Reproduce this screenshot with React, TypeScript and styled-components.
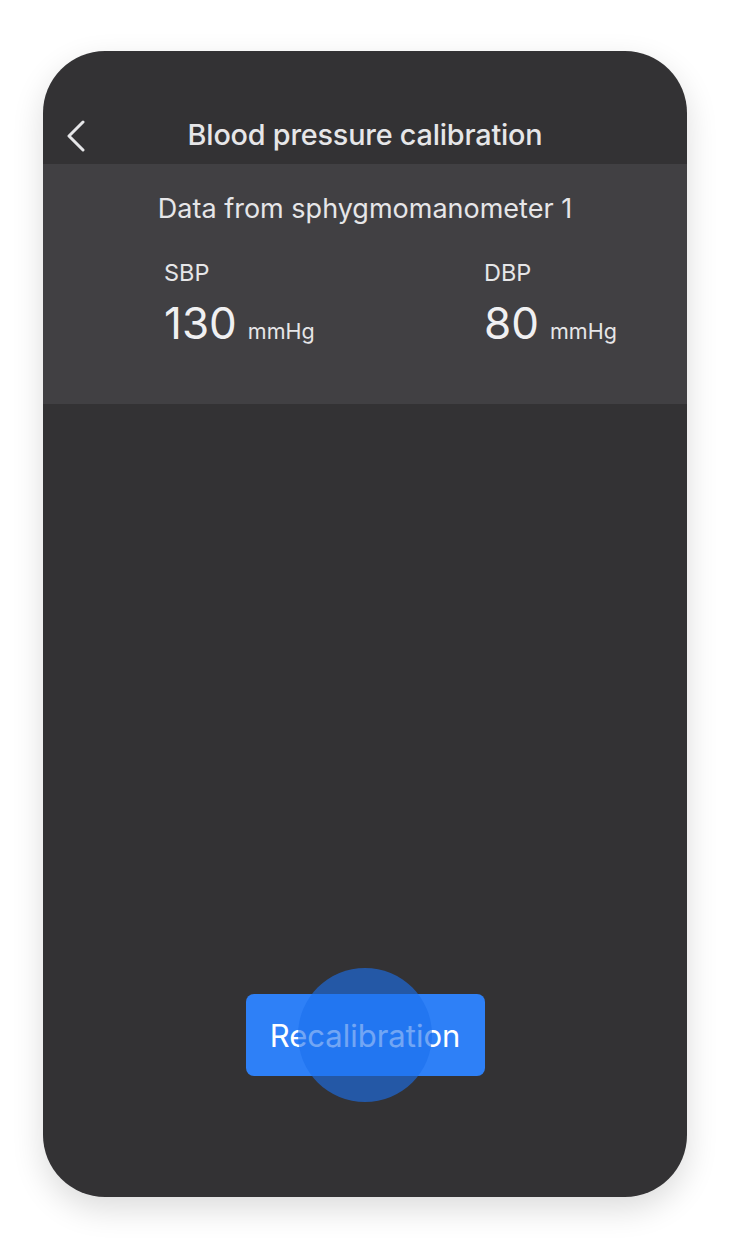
import React from 'react';
import styled, { createGlobalStyle } from 'styled-components';

const GlobalStyle = createGlobalStyle`
  html, body {
    margin: 0;
    padding: 0;
    background: #ffffff;
    font-family: 'Inter', 'Liberation Sans', sans-serif;
  }
`;

const Page = styled.div`
  width: 730px;
  height: 1247px;
  padding: 51px 43px 0 43px;
  box-sizing: border-box;
`;

const Phone = styled.div`
  width: 644px;
  height: 1146px;
  border-radius: 62px;
  background: #333234;
  box-shadow: 0 12px 32px rgba(0, 0, 0, 0.14);
  overflow: hidden;
  display: flex;
  flex-direction: column;
`;

const NavBar = styled.div`
  height: 113px;
  padding-top: 62px;
  box-sizing: border-box;
  display: flex;
  align-items: center;
  justify-content: center;
  position: relative;
`;

const BackButton = styled.button`
  position: absolute;
  left: 23px;
  top: 69px;
  background: none;
  border: none;
  padding: 0;
  display: flex;
  color: #e6e6e8;
  cursor: pointer;
`;

const Title = styled.h1`
  margin: 0;
  margin-top: -8px;
  font-size: 28.8px;
  font-weight: 500;
  color: #e6e6e8;
  letter-spacing: -0.2px;
`;

const DataCard = styled.div`
  background: #414043;
  height: 240px;
  box-sizing: border-box;
  padding: 27px 0 0 0;
  display: flex;
  flex-direction: column;
`;

const CardHeading = styled.div`
  text-align: center;
  font-size: 27px;
  color: #e6e6e8;
  line-height: 36px;
`;

const ReadingRow = styled.div`
  display: grid;
  grid-template-columns: 320px 1fr;
  padding-left: 121px;
  margin-top: 31px;
`;

const Reading = styled.div`
  display: flex;
  flex-direction: column;
`;

const ReadingLabel = styled.div`
  font-size: 23.5px;
  color: #e6e6e8;
  line-height: 30px;
`;

const ReadingValue = styled.div`
  display: flex;
  align-items: baseline;
  gap: 11px;
  margin-top: 9px;
`;

const Number = styled.span`
  font-size: 44px;
  font-weight: 400;
  color: #f0f0f2;
  line-height: 52px;
`;

const Unit = styled.span`
  font-size: 21.5px;
  color: #e6e6e8;
`;

const Body = styled.div`
  flex: 1;
  display: flex;
  flex-direction: column;
  align-items: center;
  justify-content: flex-end;
  padding-bottom: 121px;
`;

const ButtonWrap = styled.div`
  position: relative;
`;

const PrimaryButton = styled.button`
  width: 239px;
  height: 82px;
  border: none;
  border-radius: 8px;
  background: #2e80f7;
  color: #ffffff;
  font-family: inherit;
  font-size: 31px;
  font-weight: 400;
  cursor: pointer;
`;

const TouchRipple = styled.div`
  position: absolute;
  width: 134px;
  height: 134px;
  border-radius: 50%;
  left: 50%;
  top: 50%;
  transform: translate(-50%, -50%);
  background: rgba(28, 112, 238, 0.62);
  pointer-events: none;
`;

const ChevronLeft = () => (
  <svg width="22" height="32" viewBox="0 0 22 32" fill="none">
    <path d="M17 2 L3 16 L17 30" stroke="currentColor" strokeWidth="3" strokeLinecap="round" strokeLinejoin="round" />
  </svg>
);

const readings = [
  { label: 'SBP', value: 130 },
  { label: 'DBP', value: 80 },
];

export default function App() {
  return (
    <Page>
      <GlobalStyle />
      <Phone>
        <NavBar>
          <BackButton aria-label="Back">
            <ChevronLeft />
          </BackButton>
          <Title>Blood pressure calibration</Title>
        </NavBar>
        <DataCard>
          <CardHeading>Data from sphygmomanometer 1</CardHeading>
          <ReadingRow>
            {readings.map((r) => (
              <Reading key={r.label}>
                <ReadingLabel>{r.label}</ReadingLabel>
                <ReadingValue>
                  <Number>{r.value}</Number>
                  <Unit>mmHg</Unit>
                </ReadingValue>
              </Reading>
            ))}
          </ReadingRow>
        </DataCard>
        <Body>
          <ButtonWrap>
            <PrimaryButton>Recalibration</PrimaryButton>
            <TouchRipple />
          </ButtonWrap>
        </Body>
      </Phone>
    </Page>
  );
}
